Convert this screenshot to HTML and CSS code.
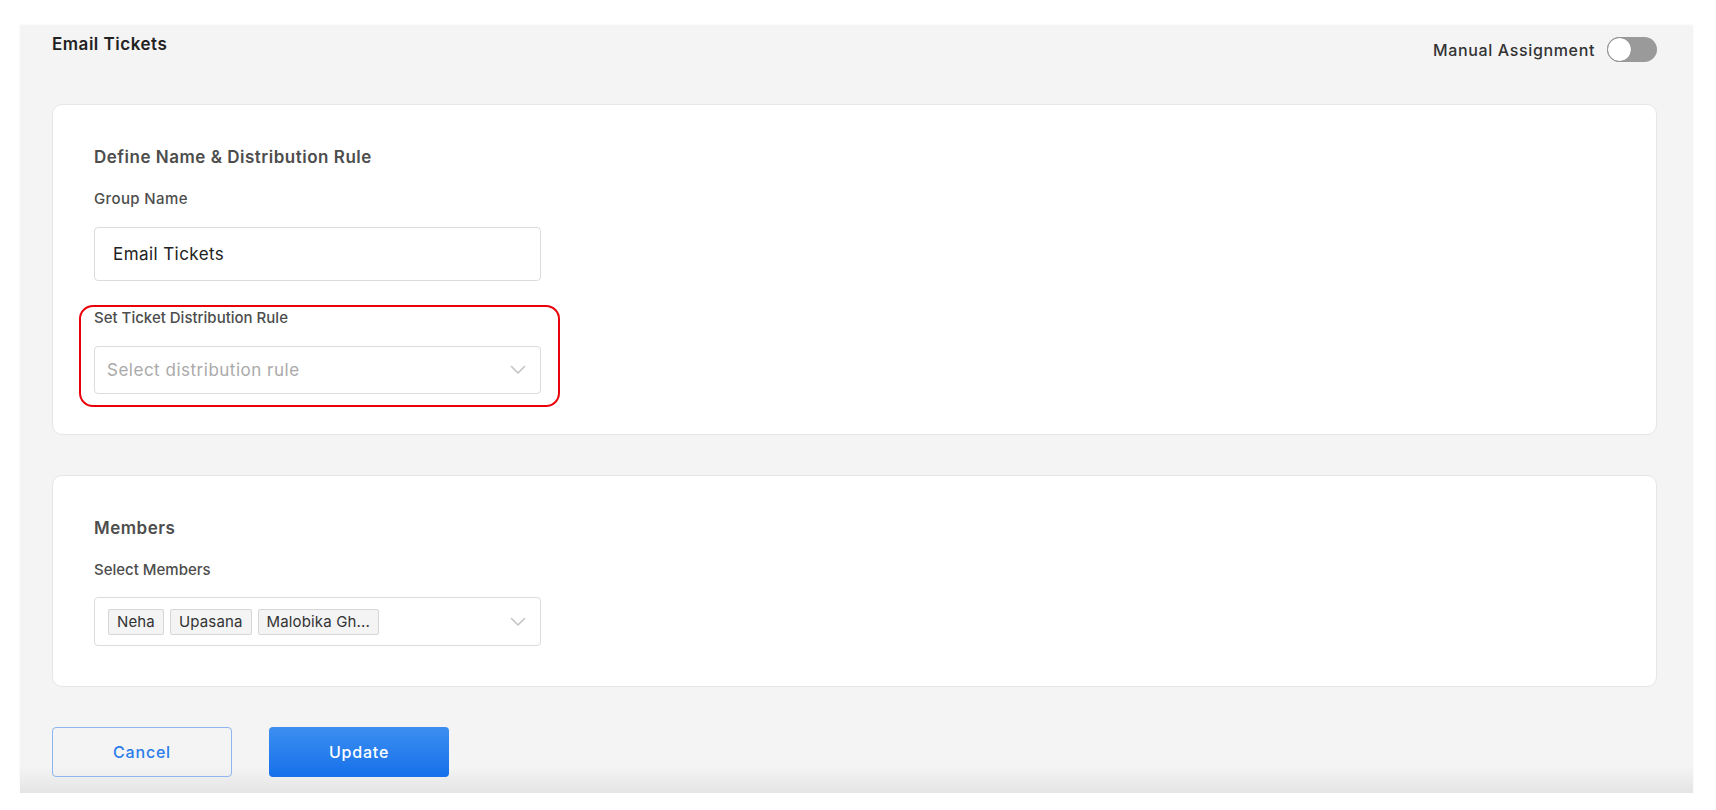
FILE: index.html
```html
<!DOCTYPE html>
<html lang="en">
<head>
<meta charset="utf-8">
<title>Email Tickets</title>
<link rel="stylesheet" href="styles.css">
</head>
<body>
<div class="panel">
  <header class="header">
    <h1 class="page-title">Email Tickets</h1>
    <div class="assign">
      <span class="assign-label">Manual Assignment</span>
      <span class="toggle"><span class="knob"></span></span>
    </div>
  </header>

  <section class="card card-rule">
    <h2 class="section-title">Define Name &amp; Distribution Rule</h2>
    <div class="field">
      <label class="field-label">Group Name</label>
      <div class="input input-tall">Email Tickets</div>
    </div>
    <div class="field field-highlight">
      <label class="field-label label-tight">Set Ticket Distribution Rule</label>
      <div class="input select">
        <span class="placeholder">Select distribution rule</span>
        <svg class="chevron" width="16" height="10" viewBox="0 0 16 10"><path d="M1.5 1.5 L8 8 L14.5 1.5" fill="none" stroke="#c4c4c4" stroke-width="1.6" stroke-linecap="round" stroke-linejoin="round"/></svg>
      </div>
    </div>
  </section>

  <section class="card card-members">
    <h2 class="section-title">Members</h2>
    <div class="field">
      <label class="field-label label-tight">Select Members</label>
      <div class="input select multi">
        <div class="tags">
          <span class="tag">Neha</span>
          <span class="tag">Upasana</span>
          <span class="tag">Malobika Gh...</span>
        </div>
        <svg class="chevron" width="16" height="10" viewBox="0 0 16 10"><path d="M1.5 1.5 L8 8 L14.5 1.5" fill="none" stroke="#c4c4c4" stroke-width="1.6" stroke-linecap="round" stroke-linejoin="round"/></svg>
      </div>
    </div>
  </section>

  <div class="actions">
    <button class="btn btn-cancel">Cancel</button>
    <button class="btn btn-update">Update</button>
  </div>
</div>
</body>
</html>
```

FILE: styles.css
```css
* { box-sizing: border-box; }

body {
  margin: 0;
  background: #ffffff;
  font-family: "Inter", "Open Sans", sans-serif;
  color: #333;
}

.panel {
  margin: 26px 23px 0 20px;
  height: 767px;
  padding: 0 36px 0 32px;
  background: linear-gradient(to bottom, #f4f4f4 0, #f4f4f4 calc(100% - 26px), #e4e4e4 100%);
  box-shadow: 0 -1px 2px rgba(0,0,0,0.06);
}

.header {
  display: flex;
  justify-content: space-between;
  align-items: flex-start;
  height: 78px;
  padding-top: 6px;
}

.page-title {
  margin: 0;
  font-size: 17px;
  line-height: 24px;
  font-weight: 600;
  letter-spacing: 0.03em;
  color: #222;
}

.assign {
  display: flex;
  align-items: center;
  gap: 12px;
  margin-top: 5px;
}

.assign-label {
  font-size: 16px;
  font-weight: 500;
  letter-spacing: 0.04em;
  color: #333;
}

.toggle {
  position: relative;
  display: inline-block;
  width: 50px;
  height: 25px;
  border-radius: 13px;
  background: #9a9a9a;
}

.knob {
  position: absolute;
  left: 0;
  top: 0;
  width: 25px;
  height: 25px;
  border-radius: 50%;
  background: #fff;
  border: 1.5px solid #8a8a8a;
}

.card {
  background: #fff;
  border: 1px solid #e6e6e6;
  border-radius: 10px;
  padding: 40px 41px 40px 41px;
}

.card-members {
  margin-top: 40px;
  padding-bottom: 40px;
}

.section-title {
  margin: 0;
  font-size: 17px;
  line-height: 24px;
  font-weight: 600;
  letter-spacing: 0.03em;
  color: #4d4d4d;
}

.field {
  width: 447px;
  margin-top: 20px;
}

.field-label {
  display: block;
  font-size: 15px;
  line-height: 20px;
  font-weight: 500;
  letter-spacing: 0.025em;
  color: #4d4d4d;
  margin-bottom: 18px;
}

.label-tight { letter-spacing: 0; }

.card-members .field { margin-top: 20px; }
.card-members .field-label { margin-bottom: 17px; }

.input {
  display: flex;
  align-items: center;
  height: 48px;
  border: 1px solid #dcdcdc;
  border-radius: 4px;
  background: #fff;
  padding: 0 14px 0 18px;
  font-size: 17px;
  letter-spacing: 0.025em;
  color: #222;
}

.input-tall { height: 54px; }

.field-highlight {
  position: relative;
  margin-top: 27px;
}

.field-highlight::after {
  content: "";
  position: absolute;
  top: -3px;
  left: -15px;
  right: -19px;
  bottom: -13px;
  border: 2px solid #e8000b;
  border-radius: 14px;
  pointer-events: none;
}

.select {
  justify-content: space-between;
  padding-left: 12px;
}

.placeholder {
  color: #aaaaaa;
  font-size: 17px;
  letter-spacing: 0.03em;
}

.chevron { flex: none; }

.multi {
  height: 49px;
  padding-left: 13px;
}

.tags {
  display: flex;
  gap: 6px;
}

.tag {
  display: inline-block;
  height: 26px;
  line-height: 24px;
  padding: 0 8px;
  border: 1px solid #d6d6d6;
  border-radius: 2px;
  background: #f4f4f4;
  font-size: 15px;
  letter-spacing: 0.01em;
  color: #333;
}

.actions {
  display: flex;
  gap: 37px;
  margin-top: 40px;
}

.btn {
  width: 180px;
  height: 50px;
  border-radius: 4px;
  font-family: inherit;
  font-size: 16px;
  font-weight: 500;
  letter-spacing: 0.05em;
  cursor: pointer;
}

.btn-cancel {
  background: transparent;
  border: 1px solid #8db6f2;
  color: #2a7de9;
}

.btn-update {
  border: none;
  background: linear-gradient(to bottom, #3d8ef0, #1570ea);
  color: #fff;
}
```
